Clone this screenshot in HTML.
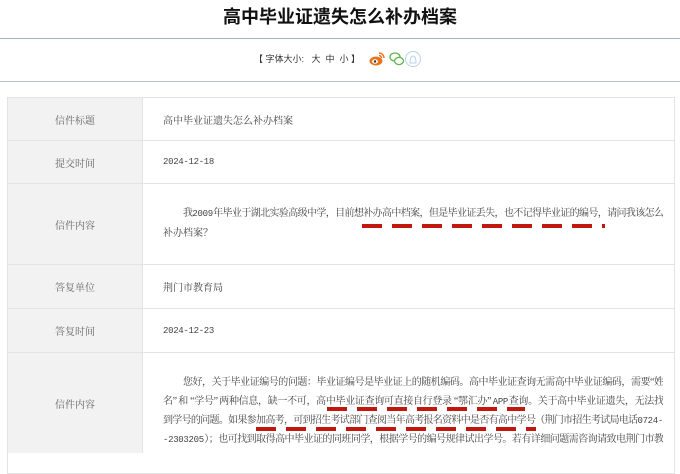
<!DOCTYPE html>
<html><head><meta charset="utf-8"><style>
body{margin:0;width:680px;height:450px;overflow:hidden;background:#fff;font-family:"Liberation Serif","Noto Serif CJK SC",serif;position:relative}
.t{position:absolute;top:4px;left:0;width:680px;text-align:center;font:bold 18px "Liberation Sans","Noto Sans CJK SC",sans-serif;color:#111;line-height:26px}
.l{position:absolute;left:0;width:680px;height:1px;background:#9fb3c4}
.tool{position:absolute;top:52px;left:254px;font:9px "Liberation Sans","Noto Sans CJK SC",sans-serif;color:#333;line-height:14px}
.tbl{position:absolute;left:7px;top:97px;width:666px;border:1px solid #e3e3e3;border-bottom:none}
.r{position:relative;border-bottom:1px solid #e3e3e3;display:flex}
.k{width:134px;background:#f2f2f2;border-right:1px solid #e3e3e3;color:#666;font-size:10px;display:flex;align-items:center;justify-content:center}
.v{flex:1;padding:0 10px 0 20px;font-size:10px;color:#444;display:flex;align-items:center;overflow:hidden}
.m{font-family:"Liberation Mono",monospace;font-size:9px;letter-spacing:-0.3px}
.p{margin:0;width:500px;overflow:hidden}
.p div{white-space:nowrap;text-align:justify;text-align-last:justify;height:20px;line-height:20px;letter-spacing:-1px}
.p div.e{text-align-last:left;letter-spacing:0}
.d{position:absolute;height:4px;background:repeating-linear-gradient(90deg,#c0180e 0 20px,transparent 20px 30px)}
</style></head><body>
<div class="t">高中毕业证遗失怎么补办档案</div>
<div class="l" style="top:38px"></div>
<div class="tool">【 字体大小: &nbsp;&nbsp;大 &nbsp;中 &nbsp;小 】</div>
<svg style="position:absolute;left:368px;top:49px" width="60" height="20" viewBox="0 0 60 20">
<ellipse cx="8" cy="12" rx="6.5" ry="4.5" fill="#e8731d"/><ellipse cx="7" cy="12.5" rx="3" ry="2.2" fill="#fff"/><circle cx="7" cy="12.5" r="1.2" fill="#333"/>
<path d="M11 4a5 5 0 0 1 5 5M11 6.5a2.5 2.5 0 0 1 2.5 2.5" stroke="#e8731d" stroke-width="1.4" fill="none"/>
<ellipse cx="27" cy="8" rx="5" ry="4" fill="none" stroke="#5fb44a" stroke-width="1.3"/><ellipse cx="31" cy="12" rx="4.5" ry="3.6" fill="#fff" stroke="#5fb44a" stroke-width="1.3"/>
<circle cx="45" cy="10" r="7.5" fill="none" stroke="#b8d2ee" stroke-width="1"/><path d="M42 14c0-5 1-7 3-7s3 2 3 7z" fill="none" stroke="#b8d2ee" stroke-width="1"/>
</svg>
<div class="l" style="top:81px;background:#b5c4d0"></div>
<div class="tbl">
<div class="r" style="height:42px"><div class="k">信件标题</div><div class="v">高中毕业证遗失怎么补办档案</div></div>
<div class="r" style="height:42px"><div class="k">提交时间</div><div class="v"><span class="m">2024-12-18</span></div></div>
<div class="r" style="height:80px"><div class="k">信件内容</div><div class="v"><div class="p">
<div style="padding-left:20px">我<span class="m">2009</span>年毕业于湖北实验高级中学，目前想补办高中档案，但是毕业证丢失，也不记得毕业证的编号，请问我该怎么</div>
<div class="e">补办档案？</div></div></div></div>
<div class="r" style="height:43px"><div class="k">答复单位</div><div class="v">荆门市教育局</div></div>
<div class="r" style="height:43px"><div class="k">答复时间</div><div class="v"><span class="m">2024-12-23</span></div></div>
<div class="r" style="height:120px;align-items:flex-start"><div class="k" style="height:100px">信件内容</div><div class="v" style="align-items:flex-start;padding-top:20px"><div class="p">
<div style="padding-left:20px;height:19px;line-height:19px">您好，关于毕业证编号的问题：毕业证编号是毕业证上的随机编码。高中毕业证查询无需高中毕业证编码，需要“姓</div>
<div style="height:19px;line-height:19px">名” 和 “学号” 两种信息，缺一不可，高中毕业证查询可直接自行登录 “鄂汇办” <span class="m">APP</span>查询。关于高中毕业证遗失，无法找</div>
<div style="height:19px;line-height:19px">到学号的问题。如果参加高考，可到招生考试部门查阅当年高考报名资料中是否有高中学号（荆门市招生考试局电话<span class="m">0724-</span></div>
<div style="height:19px;line-height:19px"><span class="m">-2303205</span>）；也可找到取得高中毕业证的同班同学，根据学号的编号规律试出学号。若有详细问题需咨询请致电荆门市教</div>
</div></div></div>
</div>
<div class="d" style="left:362px;top:224px;width:243px"></div>
<div class="d" style="left:327px;top:407px;width:198px"></div>
<div class="d" style="left:256px;top:427px;width:280px"></div>
</body></html>
